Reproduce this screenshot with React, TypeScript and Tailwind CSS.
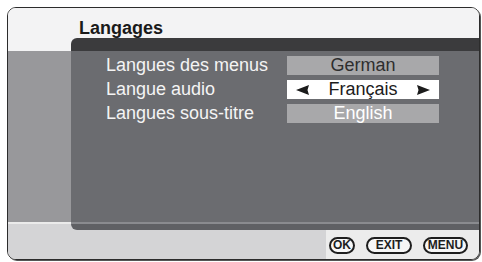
import React from "react";

const rows = [
  { label: "Langues des menus", value: "German", kind: "dim" },
  { label: "Langue audio", value: "Français", kind: "active" },
  { label: "Langues sous-titre", value: "English", kind: "muted" },
];

function Arrow({ dir }: { dir: "left" | "right" }) {
  return (
    <svg width="13" height="10" viewBox="0 0 13 10" className="shrink-0">
      {dir === "left" ? (
        <path d="M0 5 L13 0 L11.5 5 L13 10 Z" fill="#1c1c1c" />
      ) : (
        <path d="M13 5 L0 0 L1.5 5 L0 10 Z" fill="#1c1c1c" />
      )}
    </svg>
  );
}

function Key({ label, w }: { label: string; w: string }) {
  return (
    <div
      className={`flex h-[17px] ${w} items-center justify-center rounded-full border-2 border-[#1e1e1e] bg-[#f7f7f7] text-[12px] font-bold leading-none text-[#1e1e1e]`}
    >
      {label}
    </div>
  );
}

export default function App() {
  return (
    <div
      className="h-[262px] w-[482px] bg-white pb-[2px] pl-[7px] pr-[2px] pt-[7px]"
      style={{ fontFamily: '"Liberation Sans", Arial, sans-serif' }}
    >
      <div className="flex h-[253px] flex-col overflow-hidden rounded-[9px] border border-[#2c2c2c] shadow-[1px_1px_0_#555]">
        <header className="h-[30px] shrink-0 bg-[#f3f3f4] pl-[71px] pt-[11px]">
          <h1 className="text-[18px] font-bold leading-[19px] text-[#1a1a1a]">
            Langages
          </h1>
        </header>

        <div className="flex h-[192px] shrink-0 bg-[linear-gradient(to_bottom,#f3f3f4_0,#f3f3f4_13px,#98989b_13px,#98989b_184px,#ebebeb_184px,#ebebeb_186px,#d4d4d6_186px)] pl-[63px]">
          <section className="flex flex-1 flex-col overflow-hidden rounded-l-[6px]">
            <div className="h-[13px] shrink-0 bg-[#3b3b3d]" />
            <div className="flex flex-1 flex-col gap-[5px] bg-[#6b6c70] pl-[35px] pt-[5px]">
              {rows.map((row) => (
                <div key={row.label} className="flex h-[19px] items-center">
                  <span className="w-[181px] text-[18px] leading-[19px] text-[#f4f4f4]">
                    {row.label}
                  </span>
                  {row.kind === "active" ? (
                    <div className="flex h-[19px] w-[152px] items-center justify-between bg-white px-[9px] text-[18px] leading-[19px] text-[#1c1c1c]">
                      <Arrow dir="left" />
                      <span>{row.value}</span>
                      <Arrow dir="right" />
                    </div>
                  ) : (
                    <div
                      className={`flex h-[19px] w-[152px] items-center justify-center bg-[#a8a8aa] text-[18px] leading-[19px] ${
                        row.kind === "dim" ? "text-[#2e2e2e]" : "text-white"
                      }`}
                    >
                      {row.value}
                    </div>
                  )}
                </div>
              ))}
            </div>
            <div className="h-[2px] shrink-0 bg-[#8a8b8f]" />
            <div className="h-[6px] shrink-0 bg-[#5f6064]" />
          </section>
        </div>

        <footer className="flex flex-1">
          <div className="flex-1 bg-[#d4d4d6]" />
          <div className="flex w-[153px] items-center gap-[11px] bg-[#ececec] pl-[3px] pt-[1px]">
            <Key label="OK" w="w-[26px]" />
            <Key label="EXIT" w="w-[46px]" />
            <Key label="MENU" w="w-[45px]" />
          </div>
        </footer>
      </div>
    </div>
  );
}
